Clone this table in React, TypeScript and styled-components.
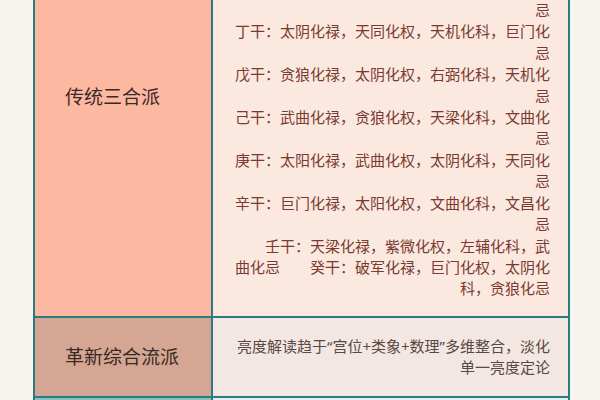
import React from 'react';
import styled, { createGlobalStyle } from 'styled-components';

const GlobalStyle = createGlobalStyle`
  html, body {
    margin: 0;
    padding: 0;
    background: #f6f4ee;
    overflow: hidden;
  }
`;

const FONT = `"Noto Sans", "Noto Sans CJK SC", sans-serif`;

// the page is scrolled: the first row starts above the window
const Page = styled.div`
  width: 600px;
  margin-top: -124px;
  padding-left: 33px;
  box-sizing: border-box;
  font-family: ${FONT};
`;

const Table = styled.div`
  display: grid;
  grid-template-columns: 176px 355px;
  gap: 2px;
  padding: 2px;
  width: max-content;
  background: #2c7b82;
`;

const LabelCell = styled.div<{ $bg: string }>`
  display: flex;
  align-items: center;
  padding-left: 30px;
  background: ${(p) => p.$bg};
  color: #3a2a25;
  font-size: 19px;
  line-height: 24px;
`;

const ContentCell = styled.div<{ $bg: string; $color: string }>`
  display: flex;
  flex-direction: column;
  justify-content: center;
  padding: 15px 18px 16px 22px;
  background: ${(p) => p.$bg};
  color: ${(p) => p.$color};
  font-size: 15px;
  line-height: 21.4px;
  text-align: right;
  text-spacing-trim: space-all;
`;

const Entry = styled.div`
  width: 315px;
`;

const Filler = styled.div<{ $bg: string }>`
  height: 60px;
  background: ${(p) => p.$bg};
`;

const sihua = [
  '甲干：廉贞化禄，破军化权，武曲化科，太阳化忌',
  '乙干：天机化禄，天梁化权，紫微化科，太阴化忌',
  '丙干：天同化禄，天机化权，文昌化科，廉贞化忌',
  '丁干：太阴化禄，天同化权，天机化科，巨门化忌',
  '戊干：贪狼化禄，太阴化权，右弼化科，天机化忌',
  '己干：武曲化禄，贪狼化权，天梁化科，文曲化忌',
  '庚干：太阳化禄，武曲化权，太阴化科，天同化忌',
  '辛干：巨门化禄，太阳化权，文曲化科，文昌化忌',
  '\u3000\u3000壬干：天梁化禄，紫微化权，左辅化科，武曲化忌\u3000\u3000癸干：破军化禄，巨门化权，太阴化科，贪狼化忌',
];

const App: React.FC = () => {
  return (
    <>
      <GlobalStyle />
      <Page>
        <Table>
          <LabelCell $bg="#fdb8a2">传统三合派</LabelCell>
          <ContentCell $bg="#fbe9e0" $color="#7a3a2f">
            {sihua.map((line) => (
              <Entry key={line}>{line}</Entry>
            ))}
          </ContentCell>

          <LabelCell $bg="#d5a693">革新综合流派</LabelCell>
          <ContentCell $bg="#f2e7e2" $color="#5a4842" style={{ paddingTop: 18, paddingBottom: 17 }}>
            <Entry>亮度解读趋于“宫位+类象+数理”多维整合，淡化单一亮度定论</Entry>
          </ContentCell>

          <Filler $bg="#86c5bc" />
          <Filler $bg="#e2f0ed" />
        </Table>
      </Page>
    </>
  );
};

export default App;
